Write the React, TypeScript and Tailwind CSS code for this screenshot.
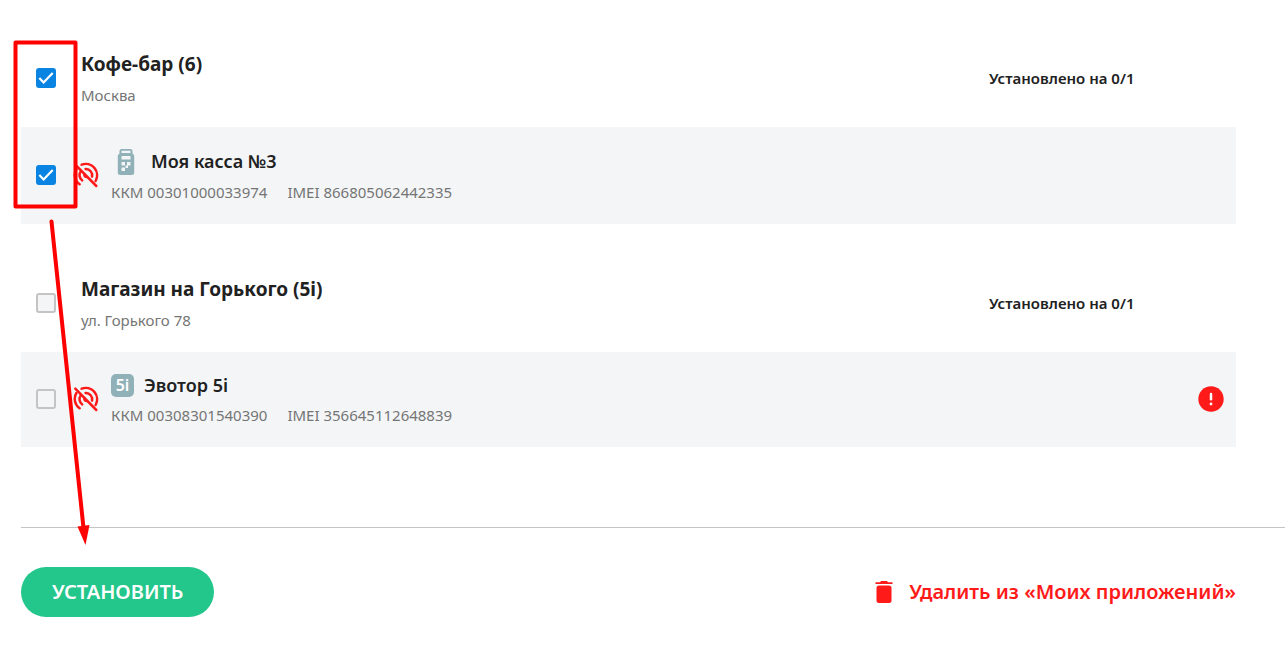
import type { ReactNode } from 'react';

type CheckProps = { label: string; checked?: boolean };

function Check({ label, checked = false }: CheckProps) {
  return (
    <span className="grid shrink-0 w-5 h-5">
      <input
        type="checkbox"
        aria-label={label}
        defaultChecked={checked}
        className="peer col-start-1 row-start-1 appearance-none w-5 h-5 rounded-[3px] border-2 border-[#c4c4c4] bg-[#f4f5f7] checked:border-[#0a84e3] checked:bg-[#0a84e3] cursor-pointer"
      />
      <svg
        viewBox="0 0 20 20"
        className="col-start-1 row-start-1 w-5 h-5 pointer-events-none opacity-0 peer-checked:opacity-100"
        fill="none"
        stroke="#fff"
        strokeWidth="2.2"
      >
        <path d="M3.3 10l4.3 4.4L16.7 5" />
      </svg>
    </span>
  );
}

function OfflineIcon() {
  return (
    <svg
      viewBox="0 0 26 26"
      className="shrink-0 w-[26px] h-[26px]"
      fill="none"
      stroke="#ff1a1a"
      strokeWidth="2.5"
      strokeLinecap="round"
    >
      <path d="M2.3 2.6L23.3 24" />
      <path d="M8.6 2.7A11.4 11.4 0 0 1 22.6 19" />
      <path d="M3.4 7A11.4 11.4 0 0 0 6.6 22.2" />
      <path d="M12.6 7A6.2 6.2 0 0 1 19 14.6" />
      <path d="M7.6 9.6A6.4 6.4 0 0 0 9.2 18.4" />
      <path d="M11.5 12.2A2 2 0 0 0 13.4 15" />
    </svg>
  );
}

function TerminalIcon() {
  return (
    <svg viewBox="0 0 30 30" className="w-[30px] h-[30px]">
      <path
        fill="#90b1b8"
        fillRule="evenodd"
        d="M10.5 3h9Q21.500 3 21.500 5V7.500Q23.200 8.500 23.200 10V26.500Q23.200 29 20.700 29H9.300Q6.800 29 6.800 26.500V10Q6.800 8.500 8.500 7.500V5Q8.500 3 10.500 3ZM10.500 4.800V7H19.500V4.800ZM10.500 10V13.500H19.500V10ZM10.500 16V19.500H14V16ZM16 16V19.500H19.500V16ZM14.500 19.500V22H17V19.500ZM10.500 21.500V25H14V21.500Z"
      />
    </svg>
  );
}

function StoreRow({ name, address, checked }: { name: string; address: string; checked?: boolean }) {
  return (
    <div className="flex items-center pt-[19px] pb-[21px] pl-[15px]">
      <Check label={name} checked={checked} />
      <div className="flex-1 pl-[25px]">
        <h2 className="text-[19px] leading-[30px] font-bold">{name}</h2>
        <p className="mt-[6px] mb-px text-[15px] leading-5 text-[#757575]">{address}</p>
      </div>
      <p className="w-[247px] text-[15px] leading-5 font-semibold">Установлено на 0/1</p>
    </div>
  );
}

type DeviceProps = {
  name: string;
  kkm: string;
  imei: string;
  icon: ReactNode;
  checked?: boolean;
  alert?: boolean;
};

function DeviceRow({ name, kkm, imei, icon, checked, alert }: DeviceProps) {
  return (
    <div className="flex items-center pt-[19px] pb-[21px] pl-[15px] pr-3 bg-[#f4f5f7]">
      <Check label={name} checked={checked} />
      <div className="pl-[17px]">
        <OfflineIcon />
      </div>
      <div className="flex-1 pl-3">
        <div className="flex items-center gap-[10px]">
          {icon}
          <h3 className="text-lg leading-7 font-semibold">{name}</h3>
        </div>
        <p className="mt-[6px] mb-px flex gap-5 text-[15px] leading-5 text-[#757575]">
          <span>ККМ {kkm}</span>
          <span>IMEI {imei}</span>
        </p>
      </div>
      {alert && (
        <svg viewBox="0 0 26 26" className="w-[26px] h-[26px]" role="img" aria-label="Ошибка">
          <circle cx="13" cy="13" r="12.7" fill="#ff1a1a" />
          <path d="M13 8v5.2" stroke="#fff" strokeWidth="2.5" strokeLinecap="round" />
          <circle cx="13" cy="18" r="1.4" fill="#fff" />
        </svg>
      )}
    </div>
  );
}

// Red frame round the ticked boxes and the arrow down to the install button
function Hint() {
  return (
    <svg
      viewBox="0 0 110 560"
      className="absolute left-0 top-0 w-[110px] h-[560px] pointer-events-none"
      fill="none"
      stroke="#ff0000"
      strokeWidth="4"
      strokeLinejoin="round"
      strokeLinecap="round"
    >
      <rect x="15.5" y="42.5" width="60" height="164" />
      <path d="M51.5 221.5L83.5 528" />
      <path d="M77.5 526.5L89.5 525L85.5 545Z" fill="#ff0000" stroke="none" />
    </svg>
  );
}

export default function App() {
  return (
    <main className="relative min-h-screen bg-white pt-[30px] pl-[21px] pb-[30px] text-[#212121] font-['Noto_Sans',sans-serif]">
      <div className="pr-[49px]">
        <section>
          <StoreRow name="Кофе-бар (6)" address="Москва" checked />
          <DeviceRow
            name="Моя касса №3"
            kkm="00301000033974"
            imei="866805062442335"
            icon={<TerminalIcon />}
            checked
          />
        </section>
        <section className="mt-[31px]">
          <StoreRow name="Магазин на Горького (5i)" address="ул. Горького 78" />
          <DeviceRow
            name="Эвотор 5i"
            kkm="00308301540390"
            imei="356645112648839"
            icon={
              <span className="w-[23px] h-[23px] rounded-[5px] bg-[#90b1b8] text-white text-base leading-[23px] font-semibold text-center">
                5i
              </span>
            }
            alert
          />
        </section>
      </div>

      <footer className="mt-20 pt-[39px] pr-[49px] border-t border-[#c4c4c4] flex items-center justify-between">
        <button
          type="button"
          className="h-[50px] px-[31px] rounded-full bg-[#23c68b] text-white text-xl font-semibold whitespace-nowrap cursor-pointer"
        >
          УСТАНОВИТЬ
        </button>
        <button type="button" className="flex items-center gap-4 text-xl font-semibold text-[#ff1a1a] cursor-pointer">
          <svg viewBox="0 0 18 24" className="w-[18px] h-6" fill="#ff1a1a">
            <path d="M0.5 2.2H5L6 1H12L13 2.2H17.5V4H0.5Z" />
            <rect x="1.5" y="5.5" width="15" height="17.5" rx="2.5" />
          </svg>
          Удалить из «Моих приложений»
        </button>
      </footer>

      <Hint />
    </main>
  );
}
